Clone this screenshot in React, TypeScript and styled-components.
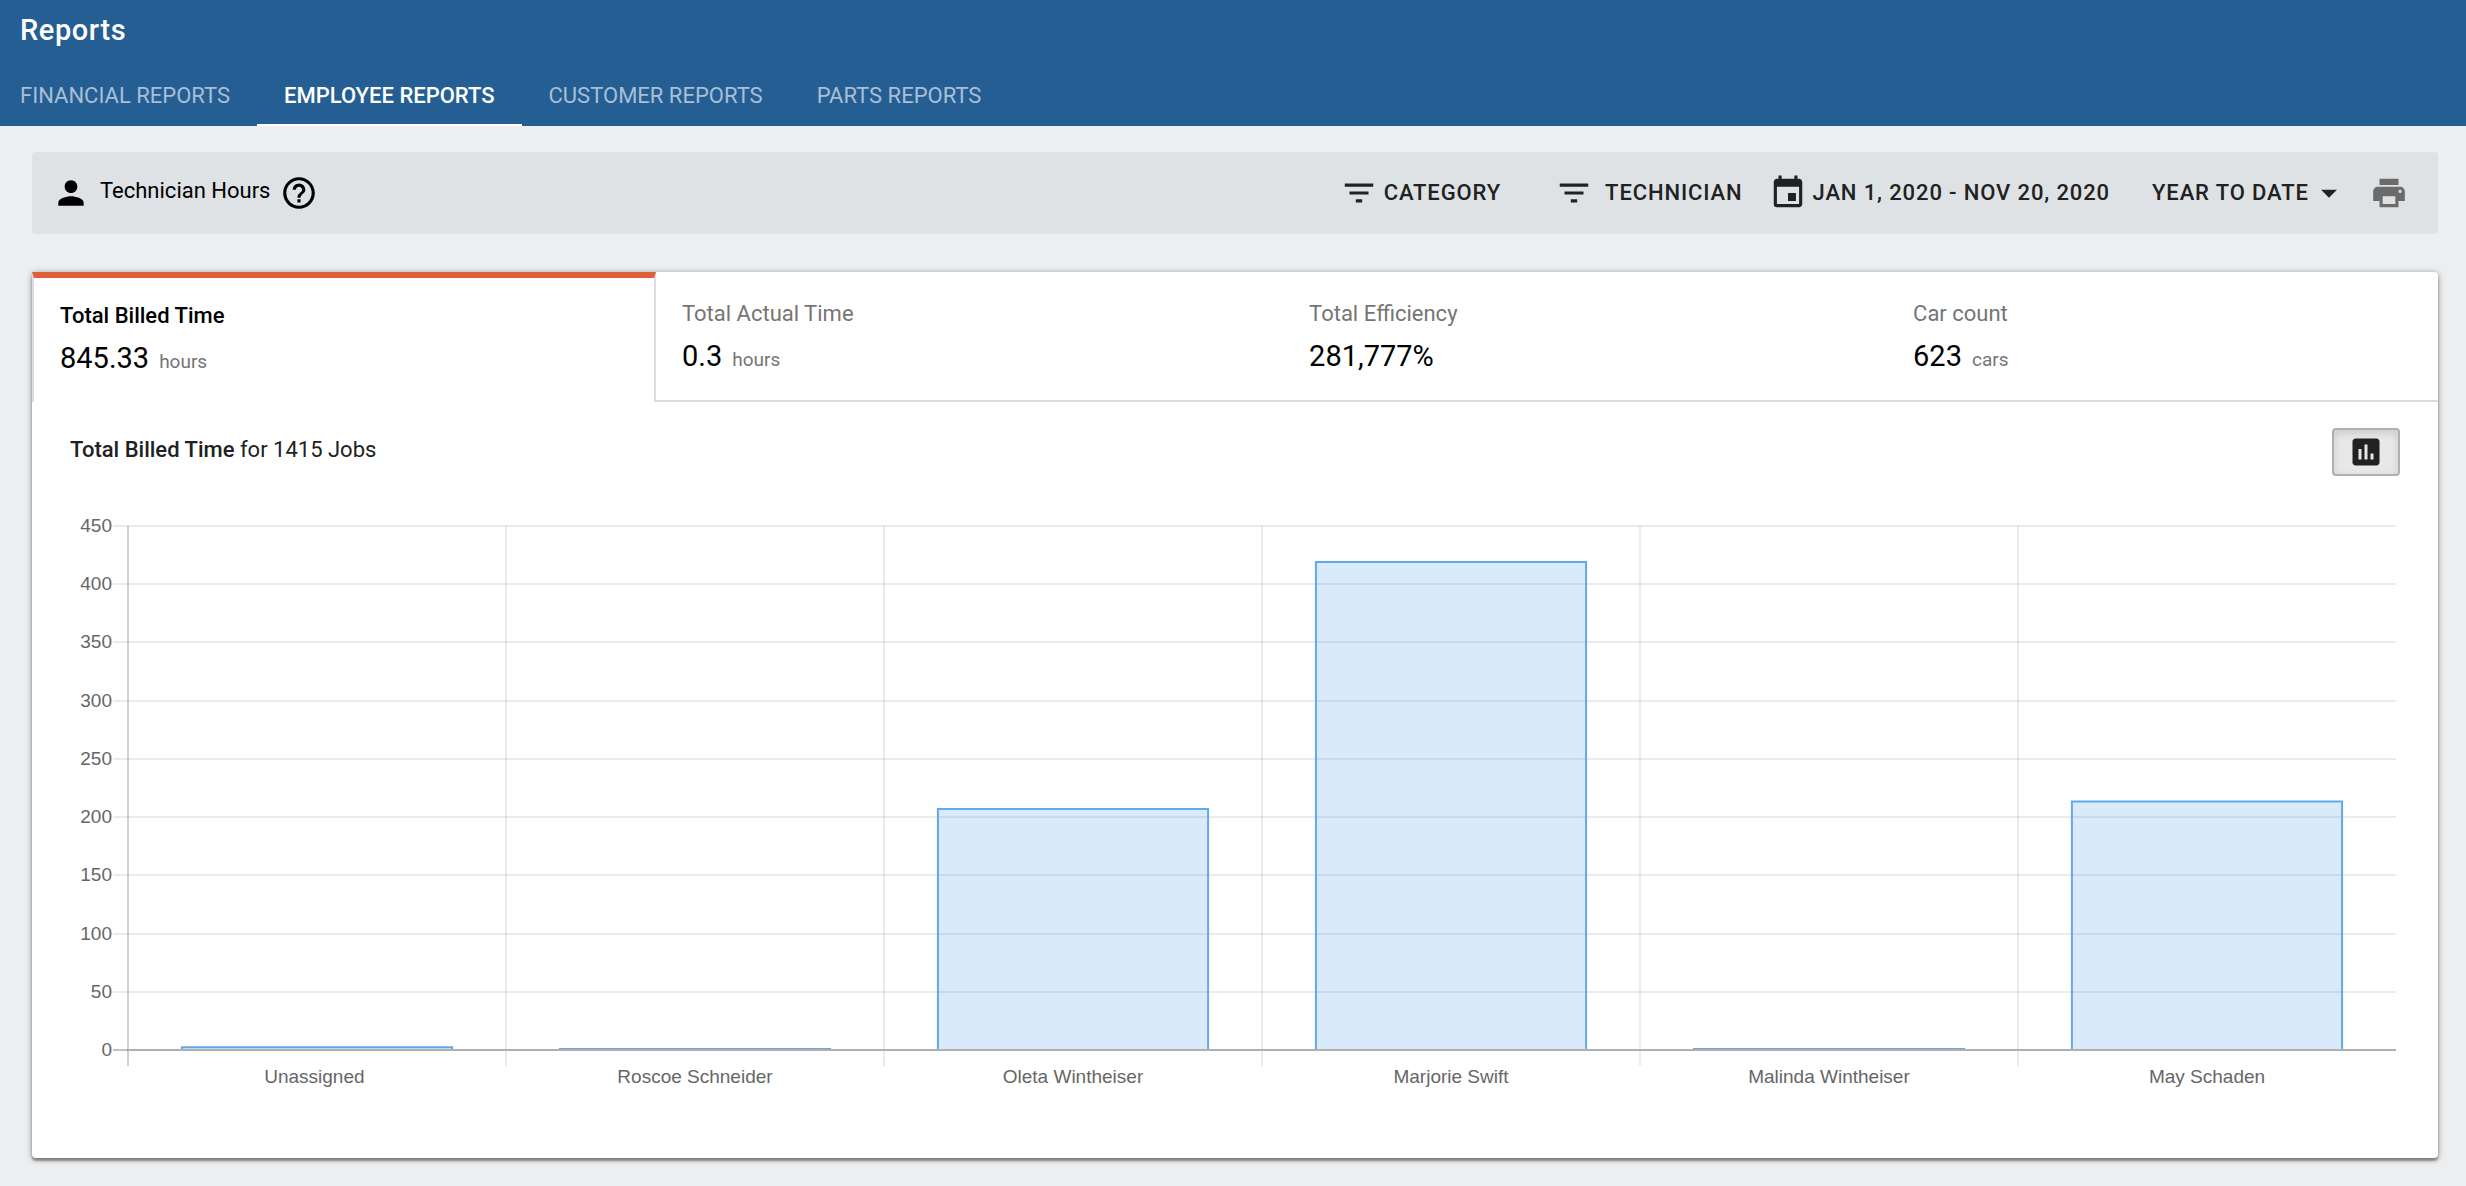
import React, { useLayoutEffect, useRef, useState } from "react";
import styled, { createGlobalStyle, css } from "styled-components";
import {
  MdArrowDropDown,
  MdAssessment,
  MdEvent,
  MdFilterList,
  MdHelpOutline,
  MdPerson,
  MdPrint,
} from "react-icons/md";

const GlobalStyle = createGlobalStyle`
  *, *::before, *::after { box-sizing: border-box; }
  body {
    margin: 0;
    background: #edeef0;
    color: #212121;
    font-family: Roboto, "Liberation Sans", sans-serif;
    font-size: 22px;
    line-height: 28px;
  }
  button, select { font: inherit; color: inherit; }
`;

const Header = styled.header`
  background: #255e93;
  color: #fff;
`;

const Title = styled.h1`
  margin: 0;
  padding: 12px 20px 0;
  font-size: 29px;
  line-height: 36px;
  font-weight: 500;
  letter-spacing: 0.02em;
`;

const Nav = styled.nav`
  display: flex;
  padding-top: 20px;
`;

const NavLink = styled.a<{ $active?: boolean }>`
  padding: 14px 27px;
  border-bottom: 2px solid ${(p) => (p.$active ? "#fff" : "transparent")};
  color: ${(p) => (p.$active ? "#fff" : "#a8bfd6")};
  font-weight: ${(p) => (p.$active ? 500 : 400)};
  text-decoration: none;
  text-transform: uppercase;
  &:first-child { padding-left: 20px; }
`;

const Main = styled.main`
  padding: 26px 28px 26px 32px;
`;

const Toolbar = styled.section`
  display: flex;
  align-items: center;
  justify-content: space-between;
  min-height: 82px;
  padding: 0 30px 0 20px;
  border-radius: 4px;
  background: #dfe2e4;
  svg { flex: none; width: 38px; height: 38px; }
`;

const ReportName = styled.div`
  display: flex;
  align-items: center;
  color: #000;
`;

const ReportTitle = styled.h2`
  margin: 0;
  padding: 0 10px 4px;
  font-size: 22px;
  font-weight: 400;
`;

const Controls = styled.div`
  display: flex;
  align-items: center;
`;

const controlText = css`
  border: 0;
  background: none;
  font-weight: 500;
  letter-spacing: 0.04em;
  text-transform: uppercase;
`;

const ToolButton = styled.button<{ $gap?: number; $after?: number }>`
  ${controlText}
  display: flex;
  align-items: center;
  gap: ${(p) => p.$gap ?? 6}px;
  margin-right: ${(p) => p.$after ?? 0}px;
  padding: 0;
`;

const IconButton = styled.button`
  display: flex;
  padding: 0;
  border: 0;
  background: none;
  color: #6b6b6b;
`;

const Period = styled.label`
  display: flex;
  align-items: center;
  margin-right: 22px;
`;

const PeriodSelect = styled.select`
  ${controlText}
  appearance: none;
  padding: 0;
`;

const Card = styled.section`
  margin-top: 38px;
  border-radius: 4px;
  background: #fff;
  box-shadow: 0 3px 2px rgba(0, 0, 0, 0.3), 0 1px 6px rgba(0, 0, 0, 0.4);
`;

const Metrics = styled.div`
  display: flex;
`;

const Metric = styled.button<{ $active?: boolean }>`
  flex: 1 1 auto;
  height: 130px;
  padding: 28px 26px 0;
  display: flex;
  flex-direction: column;
  justify-content: flex-start;
  text-align: left;
  background: none;
  border: 0 solid #dcdcdc;
  border-bottom-width: 2px;
  color: #757575;
  ${(p) =>
    p.$active &&
    css`
      padding-top: 24px;
      border-width: 6px 2px 0;
      border-top-color: #e05f39;
      color: #000;
      font-weight: 500;
    `}
`;

const MetricValue = styled.span`
  display: flex;
  align-items: baseline;
  gap: 10px;
  padding-top: 10px;
  color: #000;
  font-size: 29px;
  line-height: 36px;
  font-weight: 400;
`;

const Unit = styled.span`
  color: #757575;
  font-size: 19px;
`;

const Panel = styled.div`
  padding: 26px 38px 90px;
`;

const PanelHead = styled.div`
  display: flex;
  align-items: center;
  justify-content: space-between;
`;

const PanelTitle = styled.h3`
  margin: 0;
  padding-bottom: 4px;
  font-size: 22px;
  font-weight: 400;
  strong { font-weight: 500; }
`;

const Toggle = styled.button`
  display: flex;
  align-items: center;
  justify-content: center;
  width: 68px;
  height: 48px;
  padding: 0;
  border: 2px solid #b0b0b0;
  border-radius: 4px;
  background: #e8e8e8;
  box-shadow: inset 0 3px 8px rgba(0, 0, 0, 0.13);
  svg { width: 36px; height: 36px; }
`;

const ChartBox = styled.div`
  height: 568px;
  margin-top: 24px;
  svg { display: block; width: 100%; height: 100%; }
  text {
    fill: #666;
    font-family: "Liberation Sans", Arial, sans-serif;
    font-size: 19px;
    white-space: pre;
  }
`;

const DATA = [
  { name: "Unassigned ", hours: 2.4 },
  { name: "Roscoe Schneider", hours: 0.8 },
  { name: "Oleta Wintheiser", hours: 207 },
  { name: "Marjorie Swift", hours: 419 },
  { name: "Malinda Wintheiser", hours: 0.8 },
  { name: "May Schaden", hours: 213.5 },
];

const MAX = 450;
const TICKS = [450, 400, 350, 300, 250, 200, 150, 100, 50, 0];

function HoursChart() {
  const box = useRef<HTMLDivElement>(null);
  const [width, setWidth] = useState(0);

  useLayoutEffect(() => {
    const el = box.current;
    if (!el) return;
    setWidth(el.clientWidth);
    const observer = new ResizeObserver(() => setWidth(el.clientWidth));
    observer.observe(el);
    return () => observer.disconnect();
  }, []);

  const left = 58;
  const right = width - 4;
  const top = 26;
  const bottom = 550;
  const step = (right - left) / DATA.length;
  const y = (v: number) => bottom - (v / MAX) * (bottom - top);
  const barWidth = step * 0.72 - 2;

  return (
    <ChartBox ref={box}>
      {width > 0 && (
        <svg role="img" aria-label="Total billed time by technician" overflow="visible">
          {TICKS.map((t) => (
            <g key={t}>
              <line
                x1={left - 15}
                x2={right}
                y1={Math.round(y(t))}
                y2={Math.round(y(t))}
                stroke="#000"
                strokeOpacity={t === 0 ? 0.25 : 0.08}
                strokeWidth={2}
              />
              <text x={left - 16} y={Math.round(y(t)) + 6} textAnchor="end">
                {t}
              </text>
            </g>
          ))}
          {DATA.map((d, i) => (
            <line
              key={d.name}
              x1={left + i * step}
              x2={left + i * step}
              y1={top}
              y2={bottom + 16}
              stroke="#000"
              strokeOpacity={i === 0 ? 0.18 : 0.08}
              strokeWidth={2}
            />
          ))}
          {DATA.map((d, i) => {
            const center = left + (i + 0.5) * step;
            const x0 = center - barWidth / 2;
            const x1 = center + barWidth / 2;
            return (
              <g key={d.name}>
                <rect
                  x={x0}
                  y={y(d.hours)}
                  width={barWidth}
                  height={bottom - y(d.hours)}
                  fill="rgba(55, 145, 235, 0.19)"
                />
                <path
                  d={`M${x0} ${bottom}V${y(d.hours)}H${x1}V${bottom}`}
                  fill="none"
                  stroke="#62a9ea"
                  strokeWidth={2}
                />
                <text x={center} y={bottom + 33} textAnchor="middle">
                  {d.name}
                </text>
              </g>
            );
          })}
          <line x1={left} x2={right} y1={bottom} y2={bottom} stroke="#b0b0b0" strokeWidth={2} />
        </svg>
      )}
    </ChartBox>
  );
}

export default function App() {
  return (
    <>
      <GlobalStyle />
      <Header>
        <Title>Reports</Title>
        <Nav>
          <NavLink href="#financial">Financial Reports</NavLink>
          <NavLink href="#employee" $active aria-current="page">
            Employee Reports
          </NavLink>
          <NavLink href="#customer">Customer Reports</NavLink>
          <NavLink href="#parts">Parts Reports</NavLink>
        </Nav>
      </Header>
      <Main>
        <Toolbar>
          <ReportName>
            <MdPerson />
            <ReportTitle>Technician Hours</ReportTitle>
            <MdHelpOutline />
          </ReportName>
          <Controls>
            <ToolButton $after={54}>
              <MdFilterList />
              Category
            </ToolButton>
            <ToolButton $gap={12} $after={26}>
              <MdFilterList />
              Technician
            </ToolButton>
            <ToolButton $after={42}>
              <MdEvent />
              Jan 1, 2020 - Nov 20, 2020
            </ToolButton>
            <Period>
              <PeriodSelect aria-label="Period" defaultValue="ytd">
                <option value="ytd">Year to date</option>
              </PeriodSelect>
              <MdArrowDropDown />
            </Period>
            <IconButton aria-label="Print">
              <MdPrint />
            </IconButton>
          </Controls>
        </Toolbar>
        <Card>
          <Metrics>
            <Metric $active>
              Total Billed Time
              <MetricValue>
                845.33 <Unit>hours</Unit>
              </MetricValue>
            </Metric>
            <Metric>
              Total Actual Time
              <MetricValue>
                0.3 <Unit>hours</Unit>
              </MetricValue>
            </Metric>
            <Metric>
              Total Efficiency
              <MetricValue>281,777%</MetricValue>
            </Metric>
            <Metric>
              Car count
              <MetricValue>
                623 <Unit>cars</Unit>
              </MetricValue>
            </Metric>
          </Metrics>
          <Panel>
            <PanelHead>
              <PanelTitle>
                <strong>Total Billed Time</strong> for 1415 Jobs
              </PanelTitle>
              <Toggle aria-label="Show chart" aria-pressed="true">
                <MdAssessment />
              </Toggle>
            </PanelHead>
            <HoursChart />
          </Panel>
        </Card>
      </Main>
    </>
  );
}
